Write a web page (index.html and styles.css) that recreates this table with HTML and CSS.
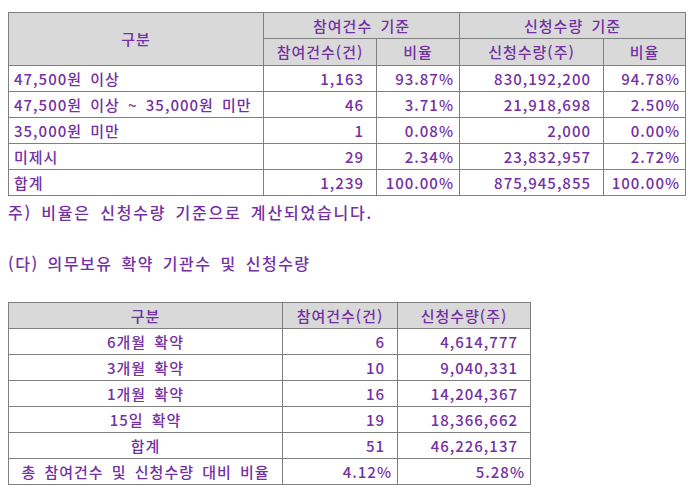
FILE: index.html
```html
<!DOCTYPE html>
<html lang="ko">
<head>
<meta charset="utf-8">
<link rel="stylesheet" href="styles.css">
</head>
<body>
<table class="tbl t1">
  <colgroup>
    <col class="c1"><col class="c2"><col class="c3"><col class="c4"><col class="c5">
  </colgroup>
  <tr class="h1">
    <th rowspan="2">구분</th>
    <th colspan="2">참여건수 기준</th>
    <th colspan="2">신청수량 기준</th>
  </tr>
  <tr class="h2">
    <th>참여건수(건)</th>
    <th>비율</th>
    <th>신청수량(주)</th>
    <th>비율</th>
  </tr>
  <tr><td class="l">47,500원 이상</td><td class="n">1,163</td><td class="p">93.87%</td><td class="n">830,192,200</td><td class="p">94.78%</td></tr>
  <tr><td class="l">47,500원 이상 ~ 35,000원 미만</td><td class="n">46</td><td class="p">3.71%</td><td class="n">21,918,698</td><td class="p">2.50%</td></tr>
  <tr><td class="l">35,000원 미만</td><td class="n">1</td><td class="p">0.08%</td><td class="n">2,000</td><td class="p">0.00%</td></tr>
  <tr><td class="l">미제시</td><td class="n">29</td><td class="p">2.34%</td><td class="n">23,832,957</td><td class="p">2.72%</td></tr>
  <tr><td class="l">합계</td><td class="n">1,239</td><td class="p">100.00%</td><td class="n">875,945,855</td><td class="p">100.00%</td></tr>
</table>
<p class="note">주) 비율은 신청수량 기준으로 계산되었습니다.</p>
<p class="heading">(다) 의무보유 확약 기관수 및 신청수량</p>
<table class="tbl t2">
  <colgroup>
    <col class="d1"><col class="d2"><col class="d3">
  </colgroup>
  <tr class="h1">
    <th>구분</th>
    <th>참여건수(건)</th>
    <th>신청수량(주)</th>
  </tr>
  <tr><td class="c">6개월 확약</td><td class="n">6</td><td class="n">4,614,777</td></tr>
  <tr><td class="c">3개월 확약</td><td class="n">10</td><td class="n">9,040,331</td></tr>
  <tr><td class="c">1개월 확약</td><td class="n">16</td><td class="n">14,204,367</td></tr>
  <tr><td class="c">15일 확약</td><td class="n">19</td><td class="n">18,366,662</td></tr>
  <tr><td class="c">합계</td><td class="n">51</td><td class="n">46,226,137</td></tr>
  <tr><td class="c">총 참여건수 및 신청수량 대비 비율</td><td class="p">4.12%</td><td class="p">5.28%</td></tr>
</table>
</body>
</html>
```
FILE: styles.css
```css
html, body {
  background: #ffffff;
}
body {
  margin: 12px 8px 0 8px;
  font-family: "Noto Sans CJK KR", "Noto Sans", sans-serif;
  font-size: 15px;
  font-weight: 500;
  letter-spacing: 1px;
  word-spacing: 3px;
  color: #7430a4;
}
.tbl {
  border-collapse: collapse;
  table-layout: fixed;
  border: 1px solid #000000;
}
.tbl th, .tbl td {
  border: 1px solid #808080;
  padding: 0;
  height: 25px;
  line-height: 20px;
  white-space: nowrap;
  overflow: hidden;
}
.tbl th {
  background: #d9d9d9;
  font-weight: 500;
  text-align: center;
}
.t1 { width: 678px; }
.c1 { width: 255px; }
.c2 { width: 113px; }
.c3 { width: 83px; }
.c4 { width: 144px; }
.c5 { width: 82px; }
.t1 .h2 th { height: 26px; }
.tbl td.l { text-align: left; padding-left: 5px; }
.tbl td.c { text-align: center; }
.tbl td.n { text-align: right; padding-right: 12px; }
.tbl td.p { text-align: right; padding-right: 5px; }
.t2 { width: 523px; margin-top: 29px; }
.d1 { width: 274px; }
.d2 { width: 115px; }
.d3 { width: 133px; }
.note {
  margin: 6px 0 0 0;
  line-height: 20px;
  font-size: 16px;
  letter-spacing: 1.8px;
  word-spacing: 3px;
}
.heading {
  margin: 31px 0 0 0;
  line-height: 20px;
  font-size: 16px;
  letter-spacing: 1.5px;
  word-spacing: 3px;
}
```
